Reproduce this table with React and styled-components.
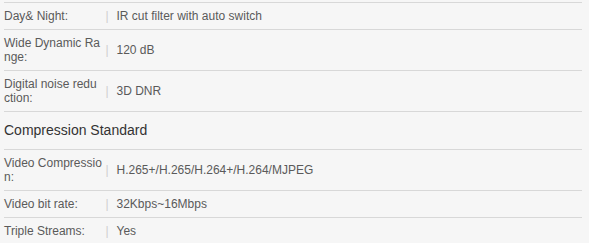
import styled, { createGlobalStyle } from "styled-components";

const GlobalStyle = createGlobalStyle`
  html, body {
    margin: 0;
    padding: 0;
    background: #f6f6f6;
  }
  body {
    font-family: "Liberation Sans", Arial, sans-serif;
  }
`;

const specs = [
  { type: "row", label: "Day& Night:", value: "IR cut filter with auto switch" },
  { type: "row", label: "Wide Dynamic Range:", value: "120 dB" },
  { type: "row", label: "Digital noise reduction:", value: "3D DNR" },
  { type: "heading", label: "Compression Standard" },
  { type: "row", label: "Video Compression:", value: "H.265+/H.265/H.264+/H.264/MJPEG" },
  { type: "row", label: "Video bit rate:", value: "32Kbps~16Mbps" },
  { type: "row", label: "Triple Streams:", value: "Yes" },
];

const SpecList = () => (
  <List>
    {specs.map((item) =>
      item.type === "heading" ? (
        <Heading key={item.label}>{item.label}</Heading>
      ) : (
        <Row key={item.label}>
          <Label>{item.label}</Label>
          <Divider>|</Divider>
          <Value>{item.value}</Value>
        </Row>
      )
    )}
  </List>
);

export default function App() {
  return (
    <>
      <GlobalStyle />
      <Page>
        <SpecList />
      </Page>
    </>
  );
}

const Page = styled.div`
  padding: 2px 0 0 4px;
  width: 578px;
`;

const List = styled.div`
  display: flex;
  flex-direction: column;
  border-top: 1px solid #d8d8d8;
`;

const Row = styled.div`
  display: flex;
  align-items: center;
  padding: 6px 0;
  border-bottom: 1px solid #d8d8d8;
  font-size: 12px;
  line-height: 14px;
  color: #5a5a5a;
`;

const Label = styled.div`
  width: 98.4px;
  flex-shrink: 0;
  word-break: break-all;
`;

const Divider = styled.span`
  margin-left: 3px;
  margin-right: 8px;
  color: #cfcfcf;
`;

const Value = styled.div`
  flex: 1;
`;

const Heading = styled.div`
  padding: 10px 0;
  font-size: 14px;
  line-height: 17px;
  color: #333;
  border-bottom: 1px solid #d8d8d8;
`;
